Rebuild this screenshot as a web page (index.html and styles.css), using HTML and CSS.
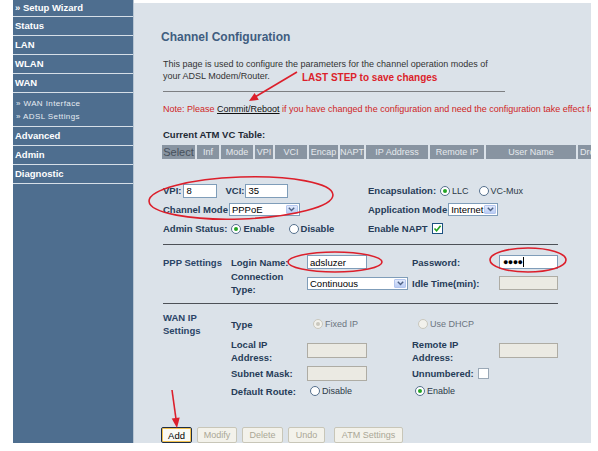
FILE: index.html
```html
<!DOCTYPE html>
<html>
<head>
<meta charset="utf-8">
<link rel="stylesheet" href="styles.css">
</head>
<body>
<div class="page">
  <nav class="side">
    <div class="nav-item first">» Setup Wizard</div>
    <div class="nav-item">Status</div>
    <div class="nav-item">LAN</div>
    <div class="nav-item">WLAN</div>
    <div class="nav-item">WAN</div>
    <div class="nav-sub">
      <div>» WAN Interface</div>
      <div>» ADSL Settings</div>
    </div>
    <div class="nav-item">Advanced</div>
    <div class="nav-item">Admin</div>
    <div class="nav-item">Diagnostic</div>
  </nav>

  <main class="main">
    <h1 class="title">Channel Configuration</h1>
    <p class="intro">This page is used to configure the parameters for the channel operation modes of<br>your ADSL Modem/Router.</p>
    <div class="rule1"></div>
    <div class="note">Note: Please <u class="link">Commit/Reboot</u> if you have changed the configuration and need the configuration take effect for the new setting.</div>
    <div class="tbl-title">Current ATM VC Table:</div>
    <div class="vc-table">
      <div class="th sel-col" style="width:33px">Select</div>
      <div class="th" style="width:22px">Inf</div>
      <div class="th" style="width:32px">Mode</div>
      <div class="th" style="width:18px">VPI</div>
      <div class="th" style="width:32px">VCI</div>
      <div class="th" style="width:29px">Encap</div>
      <div class="th" style="width:24px">NAPT</div>
      <div class="th" style="width:62px">IP Address</div>
      <div class="th" style="width:54px">Remote IP</div>
      <div class="th" style="width:90px">User Name</div>
      <div class="th left-al" style="width:60px">Drop</div>
    </div>

    <div class="s1">
      <div class="col left">
        <div class="row">
          <b class="lbl">VPI:</b><span class="inp w34">8</span>
          <b class="lbl vci">VCI:</b><span class="inp w43">35</span>
        </div>
        <div class="row">
          <b class="lbl">Channel Mode</b>
          <span class="sel w71 ml1"><span class="sel-text">PPPoE</span><span class="sel-arr"><svg width="7" height="5" viewBox="0 0 7 5"><path d="M0.8 0.8 L3.5 3.6 L6.2 0.8" fill="none" stroke="#4d6185" stroke-width="1.4"/></svg></span></span>
        </div>
        <div class="row">
          <b class="lbl">Admin Status:</b>
          <span class="radio on ml4"></span><b class="lbl rtxt">Enable</b>
          <span class="radio ml14"></span><b class="lbl rtxt">Disable</b>
        </div>
      </div>
      <div class="col right">
        <div class="row">
          <b class="lbl">Encapsulation:</b>
          <span class="radio on ml4"></span><span class="txt rtxt">LLC</span>
          <span class="radio ml10"></span><span class="txt rtxt">VC-Mux</span>
        </div>
        <div class="row">
          <b class="lbl">Application Mode</b>
          <span class="sel w50 ml1"><span class="sel-text">Internet</span><span class="sel-arr"><svg width="7" height="5" viewBox="0 0 7 5"><path d="M0.8 0.8 L3.5 3.6 L6.2 0.8" fill="none" stroke="#4d6185" stroke-width="1.4"/></svg></span></span>
        </div>
        <div class="row">
          <b class="lbl">Enable NAPT</b>
          <span class="check ml4"><svg width="9" height="9" viewBox="0 0 9 9"><path d="M1.5 4.5 L3.6 6.8 L7.6 1.8" fill="none" stroke="#21a121" stroke-width="1.6"/></svg></span>
        </div>
      </div>
    </div>

    <div class="rule2"></div>

    <div class="grid ppp">
      <b class="sec">PPP Settings</b>
      <b class="lbl">Login Name:</b>
      <span class="inp w60">adsluzer</span>
      <b class="lbl">Password:</b>
      <span class="inp w59 pw">●●●●<i class="caret"></i></span>

      <span></span>
      <b class="lbl two">Connection<br>Type:</b>
      <span class="sel w101"><span class="sel-text">Continuous</span><span class="sel-arr"><svg width="7" height="5" viewBox="0 0 7 5"><path d="M0.8 0.8 L3.5 3.6 L6.2 0.8" fill="none" stroke="#4d6185" stroke-width="1.4"/></svg></span></span>
      <b class="lbl">Idle Time(min):</b>
      <span class="inp dis w59 h14"></span>
    </div>

    <div class="rule2 r3"></div>

    <div class="grid wan">
      <b class="sec two">WAN IP<br>Settings</b>
      <b class="lbl">Type</b>
      <span class="cell"><span class="radio dis on ml6"></span><span class="txt grey rtxt">Fixed IP</span></span>
      <span class="cell"><span class="radio dis ml6"></span><span class="txt grey rtxt">Use DHCP</span></span>
      <span></span>

      <span></span>
      <b class="lbl two">Local IP<br>Address:</b>
      <span class="inp dis w60 h15"></span>
      <b class="lbl two">Remote IP<br>Address:</b>
      <span class="inp dis w59 h15"></span>

      <span></span>
      <b class="lbl">Subnet Mask:</b>
      <span class="inp dis w60 h15"></span>
      <span class="cell span2"><b class="lbl">Unnumbered:</b><span class="check white ml4"></span></span>

      <span></span>
      <b class="lbl">Default Route:</b>
      <span class="cell"><span class="radio ml3"></span><span class="txt rtxt">Disable</span></span>
      <span class="cell"><span class="radio on ml3"></span><span class="txt rtxt">Enable</span></span>
      <span></span>
    </div>

    <div class="buttons">
      <span class="btn active" style="width:31px">Add</span>
      <span class="btn" style="width:40px">Modify</span>
      <span class="btn" style="width:41px">Delete</span>
      <span class="btn" style="width:37px">Undo</span>
      <span class="btn gap9" style="width:69px">ATM Settings</span>
    </div>
  </main>

  <span class="last-step">LAST STEP to save changes</span>

  <svg class="annot" width="598" height="451" viewBox="0 0 598 451">
    <g fill="none" stroke="#dc1f2b" stroke-width="1.6">
      <line x1="297" y1="72" x2="255" y2="97"/>
      <ellipse cx="241" cy="198" rx="92" ry="21" transform="rotate(-2 241 198)"/>
      <ellipse cx="335" cy="262" rx="47" ry="10"/>
      <ellipse cx="528" cy="260" rx="38" ry="12"/>
      <line x1="172" y1="390" x2="176" y2="419"/>
    </g>
    <g fill="#dc1f2b">
      <polygon points="249,101 258.8,99.8 254.6,92.9"/>
      <polygon points="177,428 179.7,417.6 171.7,418.6"/>
    </g>
  </svg>
</div>
</body>
</html>
```

FILE: styles.css
```css
* { box-sizing: border-box; }
body {
  margin: 0;
  background: #fff;
  font-family: "Liberation Sans", Arial, sans-serif;
}
.page {
  position: relative;
  width: 598px;
  height: 451px;
  display: flex;
  align-items: flex-start;
  padding-left: 13px;
  overflow: hidden;
}

/* sidebar */
.side {
  flex: none;
  width: 121px;
  height: 443px;
  background: #4e6e8f;
  border-right: 1px solid #b7c5d2;
}
.nav-item {
  height: 19px;
  line-height: 18px;
  border-bottom: 1px solid #d6dfe8;
  padding-left: 2px;
  color: #fff;
  font-weight: bold;
  font-size: 9.5px;
  white-space: nowrap;
}
.nav-item.first { height: 17px; line-height: 16px; }
.nav-sub {
  padding: 4px 0 3px 3px;
  border-bottom: 1px solid #d6dfe8;
  color: #e6ecf2;
  font-size: 8px;
  letter-spacing: 0.4px;
  line-height: 13px;
}

/* main */
.main {
  flex: none;
  width: 457px;
  height: 440px;
  margin-top: 3px;
  background: #dbe2e9;
  overflow: hidden;
  padding: 27px 0 0 29px;
  color: #263c58;
}
.title {
  margin: 0 0 0 -2px;
  font-size: 12px;
  line-height: 14px;
  font-weight: bold;
  color: #3f5d80;
}
.intro {
  margin: 14px 0 0;
  font-size: 9px;
  line-height: 12px;
  color: #333;
  white-space: nowrap;
}
.rule1 {
  width: 342px;
  margin-top: 9px;
  border-top: 1px solid #7d7f82;
}
.note {
  margin-top: 11px;
  font-size: 9px;
  line-height: 12px;
  color: #cf1f1f;
  white-space: nowrap;
}
.link { color: #111; }
.tbl-title {
  margin-top: 14px;
  font-size: 9.5px;
  line-height: 12px;
  font-weight: bold;
  color: #1d2935;
}
.vc-table {
  display: flex;
  gap: 2px;
  margin-top: 4px;
  margin-left: -1px;
  height: 14px;
}
.th {
  flex: none;
  background: #8894a1;
  color: #e6eaee;
  font-size: 9px;
  line-height: 14px;
  text-align: center;
  white-space: nowrap;
  overflow: hidden;
}
.th.left-al { text-align: left; padding-left: 2px; }
.th.sel-col { font-size: 11px; color: #46505b; }

/* section 1 */
.s1 {
  display: flex;
  margin-top: 24px;
}
.col { display: flex; flex-direction: column; gap: 4px; }
.col.left { width: 205px; }
.row {
  height: 15px;
  display: flex;
  align-items: center;
  white-space: nowrap;
}
.lbl {
  font-size: 9.5px;
  font-weight: bold;
  color: #263c58;
  white-space: nowrap;
  line-height: 13px;
}
.lbl.two { line-height: 13px; }
.txt { font-size: 9px; color: #2d3a48; white-space: nowrap; }
.txt.grey { color: #6b7480; }
.rtxt { margin-left: 2px; }
.vci { margin-left: 8px; }
.ml1 { margin-left: 1px; }
.ml3 { margin-left: 3px; }
.ml4 { margin-left: 4px; }
.ml6 { margin-left: 6px; }
.ml10 { margin-left: 10px; }
.ml14 { margin-left: 14px; }

.inp {
  display: inline-flex;
  align-items: center;
  height: 14px;
  border: 1px solid #7f9db9;
  background: #fff;
  font-size: 9.5px;
  color: #000;
  padding: 0 2px;
  margin-left: 2px;
  white-space: nowrap;
}
.grid .inp { margin-left: 0; }
.inp.dis { background: #ebeae3; border-color: #aeaca4; }
.inp.h14 { height: 14px; }
.inp.h15 { height: 15px; }
.w34 { width: 34px; }
.w43 { width: 43px; margin-left: 1px; }
.w50 { width: 50px; }
.w59 { width: 59px; }
.w60 { width: 60px; }
.w71 { width: 71px; }
.w101 { width: 101px; }
.pw { font-size: 9px; letter-spacing: -0.6px; padding-left: 3px; }
.caret {
  display: inline-block;
  width: 1px;
  height: 10px;
  margin-left: 1px;
  background: #000;
}

.sel {
  display: inline-flex;
  align-items: stretch;
  justify-content: space-between;
  height: 13px;
  border: 1px solid #7f9db9;
  background: #fff;
  padding: 1px;
}
.sel-text {
  font-size: 9.5px;
  line-height: 9px;
  padding-left: 1px;
  color: #000;
  white-space: nowrap;
}
.sel-arr {
  width: 12px;
  display: flex;
  align-items: center;
  justify-content: center;
  background: linear-gradient(#e2eafc, #b9ccf4);
  border: 1px solid #b4c6ee;
  border-radius: 1px;
}

.radio {
  flex: none;
  display: inline-flex;
  align-items: center;
  justify-content: center;
  width: 10px;
  height: 10px;
  border: 1px solid #55708d;
  border-radius: 50%;
  background: #fff;
}
.radio.on::after {
  content: "";
  width: 4px;
  height: 4px;
  border-radius: 50%;
  background: #25a525;
}
.radio.dis { border-color: #c9c7bd; background: #f2f1ec; }
.radio.dis.on::after { background: #cac8bf; }

.check {
  flex: none;
  display: inline-flex;
  align-items: center;
  justify-content: center;
  width: 11px;
  height: 11px;
  border: 1px solid #1c5180;
  background: #fff;
}
.check.white { border-color: #9aa8b6; }

.rule2 {
  width: 395px;
  margin-top: 8px;
  border-top: 1px solid #4d5157;
}
.rule2.r3 { margin-top: 7px; }

.grid {
  display: grid;
  grid-template-columns: 68px 76px 105px 87px 60px;
  align-items: center;
}
.ppp {
  margin-top: 10px;
  grid-template-rows: 14px 26px;
  row-gap: 1px;
}
.wan {
  margin-top: 7px;
  grid-template-rows: 26px 27px 19px 16px;
}
.sec {
  font-size: 9.5px;
  font-weight: bold;
  color: #2a4466;
  line-height: 13px;
  white-space: nowrap;
}
.cell { display: flex; align-items: center; white-space: nowrap; }
.span2 { grid-column: span 2; }

.buttons {
  display: flex;
  gap: 5px;
  margin-top: 28px;
  margin-left: -2px;
}
.btn {
  flex: none;
  height: 16px;
  display: inline-flex;
  align-items: center;
  justify-content: center;
  border: 1px solid #c8c6b8;
  border-radius: 2px;
  background: #f3f2eb;
  color: #aaa796;
  font-size: 9px;
  white-space: nowrap;
}
.btn.active {
  border-color: #1f2e45;
  background: #fafaf5;
  color: #000;
  box-shadow: inset 0 0 0 1px #f2c14e;
  font-size: 9.5px;
}
.btn.gap9 { margin-left: 4px; }

/* annotations */
.last-step {
  position: absolute;
  left: 302px;
  top: 71px;
  font-size: 10px;
  line-height: 13px;
  font-weight: bold;
  color: #dc1f2b;
  white-space: nowrap;
}
.annot {
  position: absolute;
  left: 0;
  top: 0;
  pointer-events: none;
}
```
